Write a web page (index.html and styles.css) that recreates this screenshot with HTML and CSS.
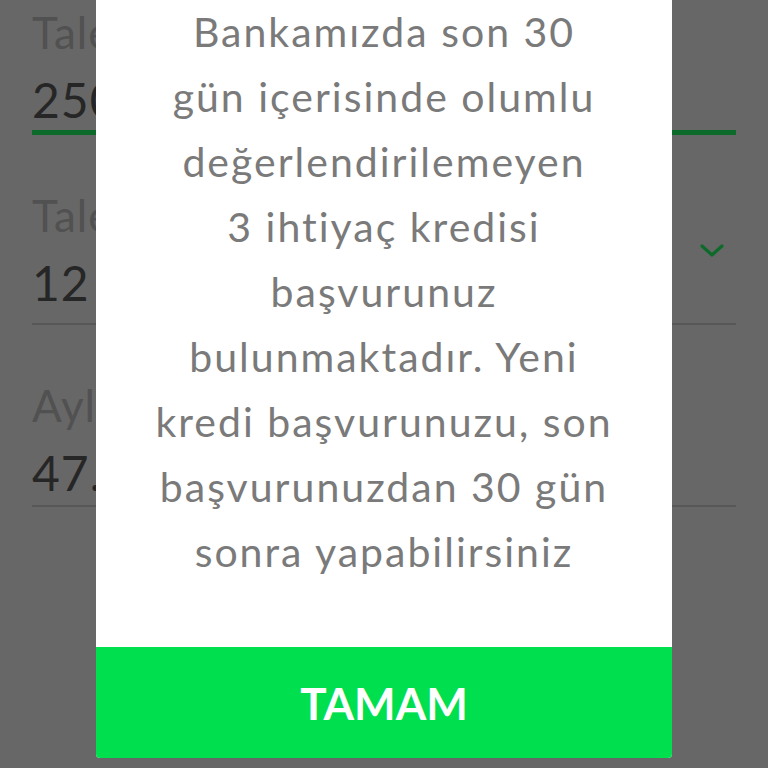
FILE: index.html
```html
<!DOCTYPE html>
<html lang="tr">
<head>
    <meta charset="UTF-8">
    <meta name="viewport" content="width=device-width, initial-scale=1.0">
    <title>Kredi Başvurusu</title>
    <link rel="stylesheet" href="styles.css">
</head>
<body>
    <div class="form">
        <div class="field active">
            <div class="field-label">Talep Edilen Tutar</div>
            <div class="field-value">25000 TL</div>
        </div>
        <div class="field select">
            <div class="field-label">Talep Edilen Vade</div>
            <div class="field-row">
                <div class="field-value">12 Ay</div>
                <svg class="chevron" width="24" height="14" viewBox="0 0 24 14">
                    <path d="M2 2 L12 11 L22 2" fill="none" stroke="currentColor" stroke-width="3.2" stroke-linecap="round" stroke-linejoin="round"/>
                </svg>
            </div>
        </div>
        <div class="field">
            <div class="field-label">Aylık Taksit Tutarı</div>
            <div class="field-value">47.</div>
        </div>
    </div>

    <div class="overlay">
        <div class="dialog">
            <p class="dialog-text">
                Bankamızda son 30<br>
                gün içerisinde olumlu<br>
                değerlendirilemeyen<br>
                3 ihtiyaç kredisi<br>
                başvurunuz<br>
                bulunmaktadır. Yeni<br>
                kredi başvurunuzu, son<br>
                başvurunuzdan 30 gün<br>
                sonra yapabilirsiniz
            </p>
            <button class="dialog-btn">TAMAM</button>
        </div>
    </div>
</body>
</html>
```

FILE: styles.css
```css
* {
    margin: 0;
    padding: 0;
    box-sizing: border-box;
}

body {
    font-family: Lato, 'Open Sans', sans-serif;
    background: #676767;
    width: 768px;
    height: 768px;
    overflow: hidden;
    position: relative;
}

/* form behind the dimmed overlay */
.form {
    padding: 0 32px;
    display: flex;
    flex-direction: column;
}

.field {
    border-bottom: 2px solid #575757;
    height: 182px;
    padding-top: 6px;
}

.field:first-child {
    height: 135px;
}

.field.active {
    border-bottom: 5px solid #0c6a2b;
}

.field.select {
    height: 190px;
    padding-top: 54px;
}

.field:last-child {
    padding-top: 54px;
}

.field-label {
    font-size: 44px;
    color: #515151;
    line-height: 52px;
    letter-spacing: 1px;
}

.field-value {
    font-size: 48px;
    color: #262626;
    line-height: 60px;
    margin-top: 12px;
    letter-spacing: 1px;
}

.field-row {
    display: flex;
    justify-content: space-between;
    align-items: center;
}

.chevron {
    color: #0c6a2b;
    margin-right: 12px;
    margin-top: -52px;
}

/* modal */
.overlay {
    position: absolute;
    inset: 0;
}

.dialog {
    position: absolute;
    left: 96px;
    width: 576px;
    top: -40px;
    height: 798px;
    background: #ffffff;
    border-radius: 0 0 4px 4px;
    display: flex;
    flex-direction: column;
    overflow: hidden;
}

.dialog-text {
    flex: 1;
    text-align: center;
    font-size: 41px;
    line-height: 65px;
    color: #7a7a7a;
    padding-top: 39px;
    letter-spacing: 2px;
}

.dialog-btn {
    height: 111px;
    border: none;
    background: #00e04e;
    color: #ffffff;
    font-family: Lato, sans-serif;
    font-weight: 700;
    font-size: 44px;
}
```
